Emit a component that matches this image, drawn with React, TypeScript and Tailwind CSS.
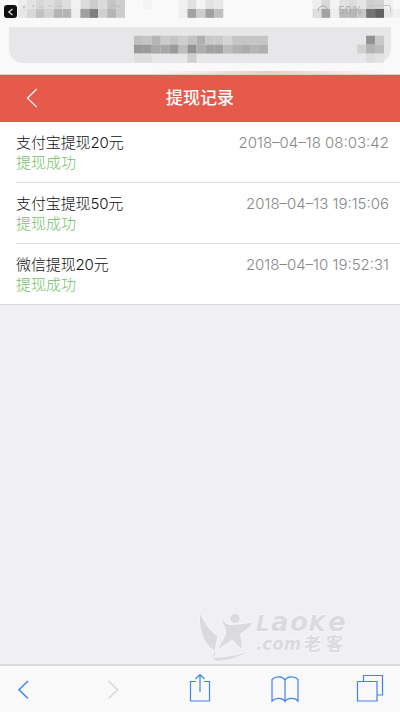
interface WithdrawRecord {
  id: number;
  title: string;
  status: string;
  time: string;
}

const records: WithdrawRecord[] = [
  { id: 1, title: "支付宝提现20元", status: "提现成功", time: "2018–04–18 08:03:42" },
  { id: 2, title: "支付宝提现50元", status: "提现成功", time: "2018–04–13 19:15:06" },
  { id: 3, title: "微信提现20元", status: "提现成功", time: "2018–04–10 19:52:31" }
];

// [column, row, colour] on a 45 x 8 grid of mosaic cells
const mosaic: [number, number, string][] = [
  [2, 0, "#ededed"], [3, 0, "#e3e3e3"], [4, 0, "#d8d8d8"], [5, 0, "#dedede"],
  [6, 0, "#d3d3d3"], [7, 0, "#dedede"], [8, 0, "#f2f2f2"], [9, 0, "#dcdcdc"],
  [10, 0, "#cdcdcd"], [11, 0, "#dadada"], [12, 0, "#c5c5c5"], [13, 0, "#cecece"],
  [2, 1, "#e6e6e6"], [3, 1, "#d8d8d8"], [4, 1, "#c2c2c2"], [5, 1, "#d2d2d2"],
  [6, 1, "#b5b5b5"], [7, 1, "#b5b5b5"], [8, 1, "#eeeeee"], [9, 1, "#a0a0a0"],
  [10, 1, "#7e7e7e"], [11, 1, "#d0d0d0"], [12, 1, "#b5b5b5"], [13, 1, "#cccccc"],
  [16, 0, "#f3f3f3"], [20, 0, "#f1f1f1"], [21, 0, "#e1e1e1"], [22, 0, "#f4f4f4"], [23, 0, "#e3e3e3"], [24, 0, "#e8e8e8"],
  [20, 1, "#eeeeee"], [21, 1, "#a2a2a2"], [22, 1, "#cdcdcd"], [23, 1, "#a0a0a0"], [24, 1, "#c0c0c0"],
  [35, 0, "#ededed"], [36, 0, "#d9d9d9"], [37, 0, "#f3f3f3"], [38, 0, "#e1e1e1"],
  [39, 0, "#dcdcdc"], [40, 0, "#e5e5e5"], [41, 0, "#cfcfcf"], [42, 0, "#d2d2d2"], [43, 0, "#f0f0f0"],
  [35, 1, "#dedede"], [36, 1, "#a3a3a3"], [37, 1, "#eeeeee"], [38, 1, "#bababa"],
  [39, 1, "#b8b8b8"], [40, 1, "#c7c7c7"], [41, 1, "#747474"], [42, 1, "#626262"], [43, 1, "#e8e8e8"], [44, 1, "#f1f1f1"],
  [15, 4, "#c0c0c1"], [16, 4, "#c5c5c6"], [17, 4, "#b5b5b6"], [18, 4, "#cbcbcc"],
  [19, 4, "#c4c4c5"], [20, 4, "#cecece"], [21, 4, "#c2c2c3"], [22, 4, "#afafb0"],
  [23, 4, "#c9c9ca"], [24, 4, "#cacacb"], [25, 4, "#d5d5d6"], [26, 4, "#c5c5c6"],
  [27, 4, "#c5c5c6"], [28, 4, "#c6c6c7"], [29, 4, "#c5c5c6"],
  [15, 5, "#999999"], [16, 5, "#9b9b9b"], [17, 5, "#aaaaaa"], [18, 5, "#a7a7a7"],
  [19, 5, "#9a9a9b"], [20, 5, "#bebebf"], [21, 5, "#929293"], [22, 5, "#adadae"],
  [23, 5, "#a1a1a2"], [24, 5, "#a1a1a2"], [25, 5, "#bdbdbe"], [26, 5, "#b2b2b3"],
  [27, 5, "#abacac"], [28, 5, "#b5b5b6"], [29, 5, "#b0b0b1"],
  [15, 6, "#dededf"], [16, 6, "#dededf"], [21, 6, "#cfcfd0"],
  [41, 4, "#929292"], [42, 4, "#c8c8c9"],
  [40, 5, "#d1d1d2"], [41, 5, "#b3b3b4"], [42, 5, "#bbbbbc"],
  [41, 6, "#dcdcdd"], [42, 6, "#e2e2e3"]
];

const CELL = 8.93;

function Mosaic() {
  return (
    <svg className="absolute inset-0" width="400" height="75" viewBox="0 0 400 75" fill="none">
      {mosaic.map(([column, row, color]) => (
        <rect key={`${column}-${row}`} x={column * CELL} y={row * CELL} width={CELL} height={CELL} fill={color} />
      ))}
      <path d="M22 7h4M24 5v4M32 6h3M39 7h4M48 6h5M57 6h6" stroke="#bdbdbd" strokeWidth="0.8" />
      <path d="M109 8q6-5 12 0" stroke="#bcbcbc" />
      <path d="M318 11a5 5 0 0 1 10 0" stroke="#aaaaaa" />
      <path d="M367.500 9V7.500a2 2 0 0 1 2-2h19a2 2 0 0 1 2 2v5" stroke="#c7c7c7" />
    </svg>
  );
}

function BrowserTop() {
  return (
    <div className="relative h-[75px] shrink-0 bg-[#f9f9f9] pt-[27px]">
      <div className="ml-[9px] h-9 w-[382px] rounded-b-[14px] bg-[#e7e7e9]" />
      <Mosaic />
      <span className="absolute top-[5px] left-[338px] font-['Inter',sans-serif] text-[11px] leading-none text-[#adadad]">
        50%
      </span>
      <div className="absolute top-[5px] left-1 flex h-[13px] w-[13px] items-center justify-center rounded-[3px] bg-[#101010]">
        <svg width="7" height="8" viewBox="0 0 7 8" fill="none" stroke="#d8d8d8" strokeWidth="1.3">
          <path d="M5.5 1 1.8 4l3.700 3" />
        </svg>
      </div>
      <div className="absolute right-3 bottom-px left-[150px] h-[3px] bg-linear-to-r from-[#f9f9f9] via-[#f5c8c2] to-[#f9f9f9]" />
      <div className="absolute inset-x-0 bottom-0 h-px bg-[#dccfcd]" />
    </div>
  );
}

function PageHeader() {
  return (
    <header className="relative flex h-[47px] shrink-0 items-center justify-center bg-[#e65a4b] pb-[2px]">
      <svg className="absolute top-[13px] left-[26px]" width="12" height="20" viewBox="0 0 12 20" fill="none" stroke="#fff" strokeWidth="1.3">
        <path d="M10.800 1 1.500 10.100l9.300 9" />
      </svg>
      <h1 className="text-[17px] leading-6 font-medium text-white">提现记录</h1>
    </header>
  );
}

function RecordRow({ record }: { record: WithdrawRecord }) {
  return (
    <li className="flex h-[61px] items-start justify-between border-b border-[#dedee0] pt-[11px] pr-[11px] last:h-[60px] last:border-b-0">
      <div className="text-[15px] leading-5 font-light">
        <p className="tracking-[-0.12px] text-[#101010]">{record.title}</p>
        <p className="text-[#6fbf66]">{record.status}</p>
      </div>
      <time className="text-[15px] leading-5 font-light text-[#888]">{record.time}</time>
    </li>
  );
}

function Watermark() {
  return (
    <svg className="absolute right-[50px] bottom-0 overflow-visible" width="155" height="54" viewBox="195 610 155 54">
      <g fill="#dadadf" stroke="#f5f5f8" strokeWidth="2" paintOrder="stroke" strokeLinejoin="round">
        <path d="M200 613.500c-1 17 4 31 14.500 37 2 4 1 6-5 7.500 13 0 26-2 38-6.500-10 6-20 9.500-31 9.500-3-1-4-4-3-6l4-19c-8-5-13-13-17.500-22.500Z" />
        <circle cx="235" cy="618.500" r="4.700" />
        <path d="M221.500 617.500c2 5 5 7 9 7.500 8 0 14-1 22.500-2.500-4 5-9 9-13 11 1 5 2 10 1.500 15.500l-9-9c-4 2-9 5-13.500 9 2-7 6-11 7-16 .5-6-4-9-4.500-15.500Z" />
        <g fontFamily="DejaVu Sans, sans-serif" fontWeight="700" fontStyle="italic">
          <text y="631">
            <tspan x="256" fontSize="21">L</tspan>
            <tspan x="271" fontSize="26">a</tspan>
            <tspan x="290" fontSize="26">o</tspan>
            <tspan x="309" fontSize="21">K</tspan>
            <tspan x="328" fontSize="26">e</tspan>
          </text>
          <text x="256" y="649.500" fontSize="18" textLength="45" lengthAdjust="spacingAndGlyphs">
            .com
          </text>
        </g>
        <text x="304" y="649.500" fontFamily="Noto Sans CJK SC, sans-serif" fontSize="17" fontWeight="700" letterSpacing="5">
          老客
        </text>
      </g>
    </svg>
  );
}

function BrowserToolbar() {
  return (
    <nav className="flex h-[48px] shrink-0 items-center border-t-2 border-[#dadadf] bg-[#f9f9f9] text-[#4084f4]">
      <svg width="400" height="46" viewBox="0 666 400 46" fill="none" stroke="currentColor" strokeWidth="1.2">
        <path d="m28 681-9 8.700 9 8.800" strokeWidth="1.500" />
        <path d="m108.500 681 9 8.700-9 8.800" stroke="#d8d8d8" strokeWidth="1.500" />
        <path d="M196 681.500h-5.500v19.500h19v-19.500H204M200 692v-17.500m-4.500 4.500 4.500-4.500 4.500 4.500" />
        <path d="M285 680c-2.500-4-9.500-4-13-.5v21.500c3.500-3.500 10.500-3.500 13 .5 2.500-4 10-4 13-.5v-21.500c-3.500-3.500-10.500-3.500-13 .5v21.500" />
        <path d="M357.500 681.500h19.500v19.500h-19.500ZM363.500 681.500v-6h19v19.500H377" />
      </svg>
    </nav>
  );
}

export default function App() {
  return (
    <div className="flex h-[712px] w-[400px] flex-col overflow-hidden bg-[#efeff4] font-['Inter','Noto_Sans_CJK_SC',sans-serif]">
      <BrowserTop />
      <PageHeader />
      <main className="relative flex-1">
        <ul className="border-b border-[#d9d9dd] bg-white pl-4">
          {records.map((record) => (
            <RecordRow key={record.id} record={record} />
          ))}
        </ul>
        <Watermark />
      </main>
      <BrowserToolbar />
    </div>
  );
}
